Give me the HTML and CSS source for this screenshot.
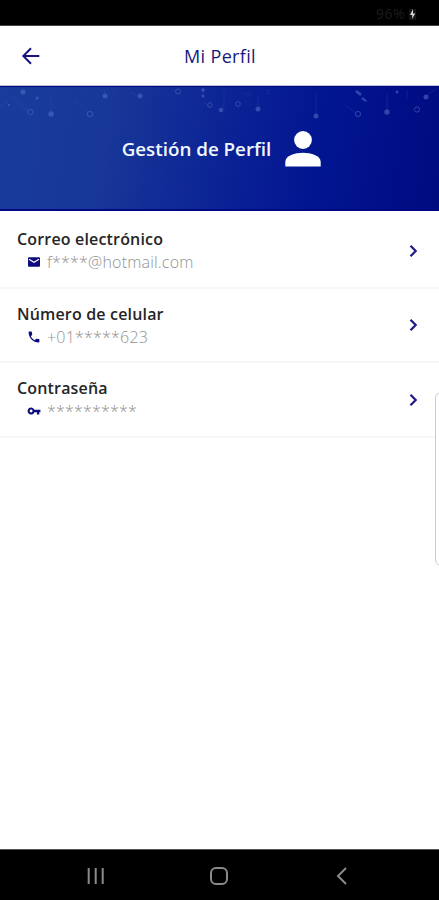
FILE: index.html
```html
<!DOCTYPE html>
<html lang="es">
<head>
<meta charset="utf-8">
<title>Mi Perfil</title>
<link rel="stylesheet" href="styles.css">
</head>
<body>
<div class="phone">
  <div class="status"><span>96%</span>
    <svg width="9" height="12" viewBox="0 0 9 12"><rect x="1" y="1" width="7" height="11" rx="1" fill="#161616"/><path d="M5 1 2 7h2.3L4 11l3.2-5.6H5z" fill="#d8d8d8"/></svg>
  </div>
  <header class="appbar">
    <svg class="back" width="18" height="18" viewBox="0 0 18 18"><path d="M17.3 9H1.5M9 1.3 1.3 9 9 16.7"/></svg>
    <h1>Mi Perfil</h1>
  </header>
  <section class="banner">
    <svg class="network" width="439" height="40" viewBox="0 0 439 40">
      <g class="lines"><path d="M11 9 28 24M51 6v20M74 12l14 14M105 3v5M130 5l8 4M203 2v8M203 15l5 3M224 4v18M258 9v12M245 7h5v3M268 8V3h3M316 6v22M345 18l11 8M387 7v18M407 3v9M427 8l9-6M0 19l8-4M35 14l4-5M81 3l4 2M112 7l4-2"/></g>
      <g class="dots"><circle cx="23" cy="5" r="2.5"/><circle cx="51" cy="27" r="2.7"/><circle cx="105" cy="9" r="2.5"/><circle cx="140" cy="9" r="2.5"/><circle cx="203" cy="3" r="1.8"/><circle cx="203" cy="9" r="1.500"/><circle cx="221" cy="23" r="2.3"/><circle cx="258" cy="22" r="2.5"/><circle cx="316" cy="29" r="2.5"/><circle cx="387" cy="25" r="2.7"/><circle cx="397" cy="5" r="1.5"/><circle cx="426" cy="10" r="2.5"/><circle cx="37" cy="11" r="1.5"/><circle cx="9" cy="18" r="1"/><path d="m355 5 2-2 5 4-2 2zM361 12l2-2 4 4-1 1z"/></g>
      <g class="rings"><circle cx="30.500" cy="25" r="2.700"/><circle cx="90" cy="27" r="2.700"/><circle cx="178" cy="4.500" r="2.500"/><circle cx="210" cy="18" r="2.300"/><circle cx="238" cy="17" r="2.300"/><circle cx="358" cy="27" r="2.600"/><circle cx="417" cy="22.500" r="2.600"/></g>
    </svg>
    <h2>Gestión de Perfil</h2>
    <svg class="person" width="36" height="36" viewBox="0 0 36 36"><circle cx="18" cy="9" r="8.900"/><path d="M.3 35.500V31C.3 24.500 10 21.800 18 21.800S35.700 24.500 35.700 31v4.500z"/></svg>
  </section>
  <main>
    <a class="row">
      <div class="info">
        <h3>Correo electrónico</h3>
        <p><svg width="12" height="12" viewBox="0 0 12 12"><path d="M1 1.300h10a1 1 0 0 1 1 1v7.400a1 1 0 0 1-1 1H1a1 1 0 0 1-1-1V2.300a1 1 0 0 1 1-1z"/><path d="m1 3.300 5 3 5-3" fill="none" stroke="#fff" stroke-width="1.100"/></svg><span>f****@hotmail.com</span></p>
      </div>
      <svg class="chev" width="9" height="14" viewBox="0 0 9 14"><path d="m1.500 1.800 5.200 5.200-5.200 5.200"/></svg>
    </a>
    <a class="row">
      <div class="info">
        <h3>Número de celular</h3>
        <p><svg width="12" height="12" viewBox="2 2 20 20"><path d="M6.620 10.790c1.440 2.830 3.760 5.140 6.590 6.590l2.200-2.200c.270-.270.670-.360 1.020-.240 1.120.370 2.330.570 3.570.570.550 0 1 .450 1 1V20c0 .550-.450 1-1 1-9.390 0-17-7.610-17-17 0-.550.450-1 1-1h3.500c.550 0 1 .450 1 1 0 1.250.200 2.450.570 3.570.110.350.030.740-.250 1.020z"/></svg><span>+01*****623</span></p>
      </div>
      <svg class="chev" width="9" height="14" viewBox="0 0 9 14"><path d="m1.500 1.800 5.200 5.200-5.200 5.200"/></svg>
    </a>
    <a class="row">
      <div class="info">
        <h3>Contraseña</h3>
        <p><svg class="key" width="14" height="12" viewBox="0 5 24 14"><path d="M12.650 10C11.830 7.670 9.610 6 7 6c-3.310 0-6 2.690-6 6s2.690 6 6 6c2.610 0 4.830-1.670 5.650-4H17v4h4v-4h2v-4zM7 14.500A2.500 2.500 0 1 1 7 9.500a2.500 2.500 0 0 1 0 5z"/></svg><span>**********</span></p>
      </div>
      <svg class="chev" width="9" height="14" viewBox="0 0 9 14"><path d="m1.500 1.800 5.200 5.200-5.200 5.200"/></svg>
    </a>
  </main>
  <div class="edge-handle"></div>
  <nav class="navbar">
    <svg width="18" height="18" viewBox="0 0 18 18"><path d="M1.700 1v16M8.700 1v16M15.700 1v16"/></svg>
    <svg width="18" height="18" viewBox="0 0 18 18"><rect x="1" y="1" width="16" height="16" rx="5"/></svg>
    <svg width="18" height="18" viewBox="0 0 18 18"><path d="M13 1 5 9l8 8"/></svg>
  </nav>
</div>
</body>
</html>
```
FILE: styles.css
```css
* { box-sizing: border-box; }
body, h1, h2, h3, p { margin: 0; }
body { font-family: "Open Sans", "Noto Sans", sans-serif; background: #fff; }
svg { display: block; flex: none; }
.phone { position: relative; width: 439px; height: 900px; display: flex; flex-direction: column; overflow: hidden; }
.status { height: 26px; background: #000; border-bottom: 1px solid #444; display: flex; justify-content: flex-end; align-items: center; gap: 3px; padding: 2px 22px 0 0; color: #1c1c1c; font-size: 14px; letter-spacing: .5px; }
.appbar { height: 60px; display: grid; grid-template-columns: 49px 1fr 49px; align-items: center; border-bottom: 1px solid #bfc2dd; }
.back { margin-left: 22px; fill: none; stroke: #14147c; stroke-width: 2; }
h1 { text-align: center; font-size: 18px; letter-spacing: .35px; line-height: 24px; font-weight: 400; color: #17177c; padding: 1px 0 0 1px; white-space: nowrap; }
.banner { position: relative; height: 125px; background: linear-gradient(100deg, #193c9b 0%, #183798 25%, #0b2395 51%, #021591 72%, #000b80 100%); border-top: 1px solid #00087c; border-bottom: 2px solid #000982; display: flex; justify-content: center; align-items: center; gap: 14px; padding: 2px 0 0 4px; }
.network { position: absolute; top: 0; left: 0; opacity: .55; }
.lines { fill: none; stroke: #3e5cb6; stroke-width: .7; opacity: .65; }
.dots { fill: #5670c6; }
.rings { fill: none; stroke: #536fc4; stroke-width: 1; }
h2 { color: #f2f7ff; font-size: 18.800px; line-height: 26px; font-weight: 600; white-space: nowrap; }
.person { fill: #fff; }
main { flex: 1; }
.row { height: 74.600px; padding: 1px 21px 0 17px; border-bottom: 2px solid #f7f7f7; display: flex; justify-content: space-between; align-items: center; }
.row:first-child { height: 77.500px; padding-top: 4px; }
.info { display: flex; flex-direction: column; }
h3 { font-size: 16px; letter-spacing: .17px; line-height: 23px; font-weight: 600; color: #252525; white-space: nowrap; }
.info p { display: flex; align-items: center; height: 22px; gap: 7px; padding-left: 11px; font-size: 16px; letter-spacing: .2px; line-height: 22px; font-weight: 300; color: #929292; white-space: nowrap; }
.info p svg { fill: #0c0c7c; }
.info p .key { margin: 0 -1px 0 -1px; }
.chev { fill: none; stroke: #211a82; stroke-width: 2.200; }
.edge-handle { position: absolute; left: 435px; top: 392px; width: 12px; height: 174px; border: 1px solid #ccc; border-radius: 6px; background: #fff; }
.navbar { height: 51px; background: #000; border-top: 1px solid #555; display: flex; justify-content: space-between; align-items: center; padding: 2px 88px 0 87px; }
.navbar svg { fill: none; stroke: #8a8a8a; stroke-width: 2; }
```
